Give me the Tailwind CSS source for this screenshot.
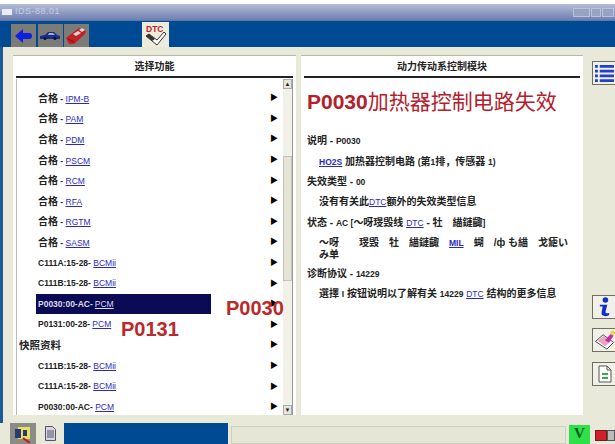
<!DOCTYPE html>
<html lang="zh">
<head>
<meta charset="UTF-8" />
<title>IDS-88.01</title>
<script src="https://cdn.jsdelivr.net/npm/@tailwindcss/browser@4"></script>
</head>
<body class="bg-white">
<div class="relative w-[615px] h-[444px] overflow-hidden flex flex-col pt-[4px] font-['Liberation_Sans','Noto_Sans_CJK_SC',sans-serif] text-[#222]">

	<!-- title bar -->
	<div class="h-[16px] shrink-0 flex items-center justify-between bg-gradient-to-b from-[#b4bdd6] to-[#6f7fb0] pl-[2px] pr-[1px]">
		<div class="flex items-center gap-[3px]">
			<div class="w-[10px] h-[6px] bg-[#e8ecf4]"></div>
			<span class="text-[9px] tracking-[0.5px] text-[#c5cde2]">IDS-88.01</span>
		</div>
		<div class="flex gap-[1px]">
			<div class="w-[17px] h-[9px] bg-[#97a3c4] border border-[#b9c2d9]"></div>
			<div class="w-[10px] h-[9px] bg-[#97a3c4] border border-[#b9c2d9]"></div>
			<div class="w-[12px] h-[9px] bg-[#97a3c4] border border-[#b9c2d9]"></div>
		</div>
	</div>

	<!-- tab band -->
	<div class="h-[27px] shrink-0 bg-[#004a94] flex items-end pl-[11px] border-t border-[#5f78a8]">
		<div class="flex gap-[1.5px]">
			<div class="w-[25px] h-[23px] bg-[#7b7b78] flex items-center justify-center">
				<svg width="18" height="14" viewBox="0 0 18 14"><path d="M0 7 8 0v4h6a3 3 0 0 1 0 6H8v4z" fill="#0c1fe0"/></svg>
			</div>
			<div class="w-[25px] h-[23px] bg-[#7b7b78] flex items-center justify-center">
				<svg width="20" height="9" viewBox="0 0 20 9"><path d="M0 5 5 4 8 1h6l3 3 3 1v3H0z" fill="#1b2c86"/><path d="M9 2h4l2 2H8z" fill="#9fb0d8"/><circle cx="5" cy="7.5" r="1.5" fill="#0a0f40"/><circle cx="15" cy="7.5" r="1.5" fill="#0a0f40"/></svg>
			</div>
			<div class="w-[25px] h-[23px] bg-[#7b7b78] flex items-center justify-center">
				<svg width="21" height="18" viewBox="0 0 21 18"><path d="M0 11 13 1l7 3-1 3L8 17H3z" fill="#c42026"/><path d="M7 7l5-3 3 2-5 3zM13 3l3-2 3 2-3 2z" fill="#d6d6d6"/><path d="M2 12l6 3" stroke="#7a1015" stroke-width="1"/></svg>
			</div>
		</div>
		<div class="ml-[53px] w-[27px] h-[25px] bg-[#ecebdc] flex items-center justify-center">
			<svg width="25" height="23" viewBox="0 0 25 23"><path d="M3 13 14 22l9-11-2-2-7 8-8-6z" fill="#fff" stroke="#333" stroke-width="1"/><path d="M3 13l6 5 3-2-6-5z" fill="#333"/><text x="3" y="9" font-size="8.5" font-weight="700" fill="#c0202a" font-family="Liberation Sans">DTC</text></svg>
		</div>
	</div>

	<!-- main area -->
	<div class="flex-1 min-h-0 flex bg-[#e9e9da] pl-[10px] border-l-[3px] border-l-[#1b5a96] pt-[8px] pb-[8px]">
		<!-- left panel -->
		<div class="w-[283px] bg-white flex flex-col px-[3px] border-t border-[#b9b9a8]">
			<div class="h-[20px] flex items-center justify-center text-[10px] font-semibold">选择功能</div>
			<div class="h-[2px] bg-[#222]"></div>
			<div class="flex-1 min-h-0 flex border-l border-[#bbb] mt-[1px]">
				<div class="w-[266px] overflow-hidden pt-[9px] text-[8.5px] font-semibold">
					<div class="h-[20.6px] flex items-center justify-between pl-[21px] pr-[5px]"><span><span class="text-[10px]">合格</span> - <a class="text-[#2a2ac0] underline font-normal">IPM-B</a></span><span class="text-[8px] text-black">▶</span></div>
					<div class="h-[20.6px] flex items-center justify-between pl-[21px] pr-[5px]"><span><span class="text-[10px]">合格</span> - <a class="text-[#2a2ac0] underline font-normal">PAM</a></span><span class="text-[8px] text-black">▶</span></div>
					<div class="h-[20.6px] flex items-center justify-between pl-[21px] pr-[5px]"><span><span class="text-[10px]">合格</span> - <a class="text-[#2a2ac0] underline font-normal">PDM</a></span><span class="text-[8px] text-black">▶</span></div>
					<div class="h-[20.6px] flex items-center justify-between pl-[21px] pr-[5px]"><span><span class="text-[10px]">合格</span> - <a class="text-[#2a2ac0] underline font-normal">PSCM</a></span><span class="text-[8px] text-black">▶</span></div>
					<div class="h-[20.6px] flex items-center justify-between pl-[21px] pr-[5px]"><span><span class="text-[10px]">合格</span> - <a class="text-[#2a2ac0] underline font-normal">RCM</a></span><span class="text-[8px] text-black">▶</span></div>
					<div class="h-[20.6px] flex items-center justify-between pl-[21px] pr-[5px]"><span><span class="text-[10px]">合格</span> - <a class="text-[#2a2ac0] underline font-normal">RFA</a></span><span class="text-[8px] text-black">▶</span></div>
					<div class="h-[20.6px] flex items-center justify-between pl-[21px] pr-[5px]"><span><span class="text-[10px]">合格</span> - <a class="text-[#2a2ac0] underline font-normal">RGTM</a></span><span class="text-[8px] text-black">▶</span></div>
					<div class="h-[20.6px] flex items-center justify-between pl-[21px] pr-[5px]"><span><span class="text-[10px]">合格</span> - <a class="text-[#2a2ac0] underline font-normal">SASM</a></span><span class="text-[8px] text-black">▶</span></div>
					<div class="h-[20.6px] flex items-center justify-between pl-[21px] pr-[5px]"><span>C111A:15-28- <a class="text-[#2a2ac0] underline font-normal">BCMii</a></span><span class="text-[8px] text-black">▶</span></div>
					<div class="h-[20.6px] flex items-center justify-between pl-[21px] pr-[5px]"><span>C111B:15-28- <a class="text-[#2a2ac0] underline font-normal">BCMii</a></span><span class="text-[8px] text-black">▶</span></div>
					<div class="h-[20.6px] flex items-center justify-between pl-[19px] pr-[5px]"><span class="w-[175px] h-[20px] pl-[2px] flex items-center gap-[2px] bg-[#0a0a55] text-[#dcdce8]">P0030:00-AC- <a class="text-[#dcdce8] underline font-normal">PCM</a></span><span class="text-[8px] text-black">▶</span></div>
					<div class="h-[20.6px] flex items-center justify-between pl-[21px] pr-[5px]"><span>P0131:00-28- <a class="text-[#2a2ac0] underline font-normal">PCM</a></span><span class="text-[8px] text-black">▶</span></div>
					<div class="h-[20.6px] flex items-center justify-between pl-[2px] pr-[5px]"><span class="text-[10.5px]">快照资料</span><span class="text-[8px] text-black">▶</span></div>
					<div class="h-[20.6px] flex items-center justify-between pl-[21px] pr-[5px]"><span>C111B:15-28- <a class="text-[#2a2ac0] underline font-normal">BCMii</a></span><span class="text-[8px] text-black">▶</span></div>
					<div class="h-[20.6px] flex items-center justify-between pl-[21px] pr-[5px]"><span>C111A:15-28- <a class="text-[#2a2ac0] underline font-normal">BCMii</a></span><span class="text-[8px] text-black">▶</span></div>
					<div class="h-[20.6px] flex items-center justify-between pl-[21px] pr-[5px]"><span>P0030:00-AC- <a class="text-[#2a2ac0] underline font-normal">PCM</a></span><span class="text-[8px] text-black">▶</span></div>
				</div>
				<!-- scrollbar -->
				<div class="w-[10px] bg-[#f1f1e8] flex flex-col border-r border-[#999]">
					<div class="h-[10px] bg-[#e6e6da] border border-[#aaa] text-[6px] leading-[8px] text-center">▲</div>
					<div class="h-[67px]"></div>
					<div class="h-[125px] bg-[#e4e4d6] border border-[#c4c4b4]"></div>
					<div class="flex-1"></div>
					<div class="h-[10px] bg-[#e6e6da] border border-[#aaa] text-[6px] leading-[8px] text-center">▼</div>
				</div>
			</div>
		</div>

		<!-- right panel -->
		<div class="ml-[5px] w-[282px] shrink-0 bg-white flex flex-col px-[3px] border-t border-[#b9b9a8]">
			<div class="h-[20px] flex items-center justify-center text-[10px] font-semibold">动力传动系控制模块</div>
			<div class="h-[2px] bg-[#222]"></div>
			<div class="pl-[3px] pr-[6px] pt-[7px] text-[10px] font-semibold">
				<div class="h-[34px] leading-[34px] whitespace-nowrap text-[21px] text-[#b3202c] font-normal"><b>P0030</b>加热器控制电路失效</div>
				<p class="mt-[15px] leading-[14px]">说明 - <span class="text-[8.5px]">P0030</span></p>
				<p class="mt-[7px] ml-[12px] leading-[14px]"><a class="text-[#2a2ac0] underline text-[8.5px]">HO2S</a> 加热器控制电路 <span class="text-[8.5px]">(</span>第<span class="text-[8.5px]">1</span>排，传感器 <span class="text-[8.5px]">1)</span></p>
				<p class="mt-[6px] leading-[14px]">失效类型 - <span class="text-[8.5px]">00</span></p>
				<p class="mt-[6px] ml-[12px] leading-[14px]">没有有关此<a class="text-[#2a2ac0] underline font-normal text-[8.5px]">DTC</a>额外的失效类型信息</p>
				<p class="mt-[7px] leading-[14px]">状态 - <span class="text-[8.5px]">AC [</span>〜呀琝毁线 <a class="text-[#2a2ac0] underline font-normal text-[8.5px]">DTC</a> - 牡　緢鏈齱<span class="text-[8.5px]">]</span></p>
				<p class="mt-[7px] ml-[12px] leading-[12px]">〜呀　　琝毁　牡　緢鏈齱　<a class="text-[#2a2ac0] underline text-[8.5px]">MIL</a>　蝴　/ф も緢　戈瘧い<br />み单</p>
				<p class="mt-[6px] leading-[14px]">诊断协议 - <span class="text-[8.5px]">14229</span></p>
				<p class="mt-[6px] ml-[12px] leading-[14px]">選擇 <span class="text-[8.5px]">I</span> 按钮说明以了解有关 <span class="text-[8.5px]">14229</span> <a class="text-[#2a2ac0] underline font-normal text-[8.5px]">DTC</a> 结构的更多信息</p>
			</div>
		</div>

		<!-- right toolbar -->
		<div class="ml-[9px] w-[25px] shrink-0 flex flex-col">
			<div class="mt-[6px] w-[25px] h-[24px] bg-[#f1f1e8] border border-[#6f6f60] flex items-center justify-center">
				<svg width="19" height="19" viewBox="0 0 20 20" fill="#1e3fd0"><path d="M0 1h3v3H0zM5 1h15v3H5zM0 6h3v3H0zM5 6h15v3H5zM0 11h3v3H0zM5 11h15v3H5zM0 16h3v3H0zM5 16h15v3H5z"/></svg>
			</div>
			<div class="mt-[210px] w-[25px] h-[24px] bg-[#f1f1e8] border border-[#6f6f60] flex items-center justify-center">
				<svg width="13" height="20" viewBox="0 0 14 21" fill="#1230c8"><circle cx="8" cy="3" r="3"/><path d="M2 8h8l-2 8q0 2 4 1v2q-3 2-6 1-3-1-2-4l1-6H2z"/></svg>
			</div>
			<div class="mt-[9px] w-[25px] h-[24px] bg-[#f1f1e8] border border-[#6f6f60] flex items-center justify-center">
				<svg width="22" height="21" viewBox="0 0 22 22"><path d="M1 12 9 5l11 8-7 7z" fill="#fff" stroke="#444"/><path d="M3 11l7-5 7 6-6 5z" fill="#e6a8c0"/><path d="M11 11 17 4l3 2-5 7z" fill="#c828a8"/><circle cx="19" cy="3" r="2.5" fill="#e8d848"/></svg>
			</div>
			<div class="mt-[10px] w-[25px] h-[24px] bg-[#f1f1e8] border border-[#6f6f60] flex items-center justify-center">
				<svg width="14" height="18" viewBox="0 0 14 18"><path d="M1 1h8l4 4v12H1z" fill="#fff" stroke="#555"/><path d="M4 8h6v2H4zM4 12h6v2H4z" fill="#3da84a"/><path d="M9 1v4h4" fill="none" stroke="#555"/></svg>
			</div>
		</div>
	</div>

	<!-- bottom bar -->
	<div class="h-[21px] shrink-0 flex bg-[#e9e9da]">
		<div class="ml-[10px] w-[26px] bg-[#8c8c86] flex items-center justify-center">
			<svg width="18" height="18" viewBox="0 0 18 18"><path d="M4 2h12v12H4z" fill="#e8e060"/><path d="M1 4h6v9H1z" fill="#2a3a70"/><path d="M9 5h4v6H9z" fill="#2a3a70"/><path d="M9 13l7 5" stroke="#b02020" stroke-width="2"/></svg>
		</div>
		<div class="w-[28px] flex items-center justify-center">
			<svg width="11" height="15" viewBox="0 0 11 15"><path d="M.5.5h7l3 3v11H.5z" fill="#d4d4f0" stroke="#555"/><path d="M2 5h7M2 7h7M2 9h7M2 11h7" stroke="#555"/></svg>
		</div>
		<div class="w-[164px] bg-[#004a94]"></div>
		<div class="ml-[3px] w-[335px] mt-[3px] border border-[#cfcfbf] bg-[#e6e6d6]"></div>
		<div class="ml-[3px] mt-[2px] w-[21px] bg-[#2ee04a] flex items-start justify-center text-[15px] leading-[16px] font-bold font-['Liberation_Serif',serif] text-[#0b5a20]">V</div>
		<div class="ml-[5px] flex items-center mt-[4px]">
			<div class="w-[12px] h-[11px] bg-[#d0202a] border border-[#7a1a1a]"></div>
			<div class="w-[8px] h-[11px] bg-[#bbb] border border-[#555]"></div>
		</div>
	</div>

	<!-- red annotations lying over the list -->
	<div class="absolute left-[226px] top-[298px] text-[20px] font-bold leading-none text-[#b92a2a]">P0030</div>
	<div class="absolute left-[121px] top-[319px] text-[20px] font-bold leading-none text-[#b92a2a]">P0131</div>
</div>
</body>
</html>
